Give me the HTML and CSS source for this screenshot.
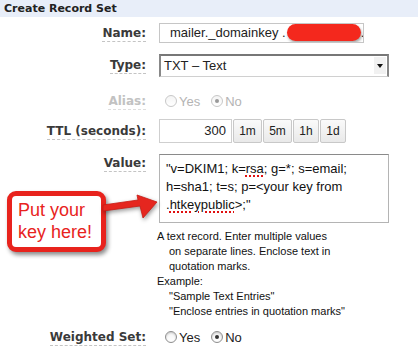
FILE: index.html
```html
<!DOCTYPE html>
<html lang="en">
<head>
    <meta charset="UTF-8">
    <title>Create Record Set</title>
    <link rel="stylesheet" href="styles.css">
</head>
<body>
    <div class="panel">
        <div class="panel-title">Create Record Set</div>

        <div class="row row-name">
            <div class="label"><span>Name:</span></div>
            <div class="field">
                <div class="text-input name-input">mailer._domainkey .<span class="redact"></span>.</div>
            </div>
        </div>

        <div class="row row-type">
            <div class="label"><span>Type:</span></div>
            <div class="field">
                <div class="select">
                    <span class="select-text">TXT &ndash; Text</span>
                    <span class="select-btn"><span class="caret"></span></span>
                </div>
            </div>
        </div>

        <div class="row row-alias disabled">
            <div class="label"><span>Alias:</span></div>
            <div class="field radios">
                <span class="radio"></span><span class="radio-label">Yes</span>
                <span class="radio checked"></span><span class="radio-label">No</span>
            </div>
        </div>

        <div class="row row-ttl">
            <div class="label"><span>TTL (seconds):</span></div>
            <div class="field ttl">
                <div class="text-input ttl-input">300</div>
                <div class="ttl-btn wide">1m</div>
                <div class="ttl-btn wide">5m</div>
                <div class="ttl-btn">1h</div>
                <div class="ttl-btn">1d</div>
            </div>
        </div>

        <div class="row row-value">
            <div class="label"><span>Value:</span></div>
            <div class="field">
                <div class="textarea">"v=DKIM1; k=<span class="typo">rsa</span>; g=*; s=email;<br>h=sha1; t=s; p=&lt;your key from<br>.<span class="typo">htkeypublic</span>&gt;;"</div>
            </div>
        </div>

        <div class="row row-help">
            <div></div>
            <div class="help">
                <p>A text record. Enter multiple values on separate lines. Enclose text in quotation marks.</p>
                <p>Example:</p>
                <p class="indent">"Sample Text Entries"</p>
                <p class="indent">"Enclose entries in quotation marks"</p>
            </div>
        </div>

        <div class="row row-weighted">
            <div class="label"><span>Weighted Set:</span></div>
            <div class="field radios">
                <span class="radio"></span><span class="radio-label">Yes</span>
                <span class="radio checked"></span><span class="radio-label">No</span>
            </div>
        </div>

        <!-- annotation -->
        <div class="callout">Put your<br>key here!</div>
        <svg class="arrow" width="60" height="32" viewBox="0 0 60 32">
            <polygon points="3,15 38,10 37,5 57,12 43,28 40,16 3,21" fill="#e5261f" stroke="#c81a14" stroke-width="0.8" stroke-linejoin="round"/>
        </svg>
    </div>
</body>
</html>
```

FILE: styles.css
```css
body {
    margin: 0;
    padding: 0;
    background: #fff;
    font-family: 'Liberation Sans', Arial, sans-serif;
    color: #222;
}
.panel {
    position: relative;
    width: 418px;
    height: 363px;
    overflow: hidden;
}
.panel-title {
    height: 17px;
    line-height: 17px;
    padding-left: 4px;
    background-color: #e8eef9;
    font-family: 'DejaVu Sans', Verdana, sans-serif;
    font-weight: bold;
    font-size: 11px;
    color: #222;
}
.row {
    display: grid;
    grid-template-columns: 146px 1fr;
    column-gap: 13px;
    align-items: center;
}
.label {
    text-align: right;
    font-family: 'DejaVu Sans', Verdana, sans-serif;
    font-weight: bold;
    font-size: 12px;
    line-height: 15px;
    color: #3a3a3a;
}
.label span {
    border-bottom: 1px dashed #c4c4c4;
    padding-bottom: 1px;
}
.disabled .label {
    color: #c2c2c2;
}
.disabled .label span {
    border-bottom-color: #dedede;
}

.row-name {
    margin-top: 6px;
    height: 20px;
}
.row-type {
    margin-top: 11px;
    height: 23px;
}
.row-alias {
    margin-top: 15px;
    height: 18px;
}
.row-ttl {
    margin-top: 9px;
    height: 24px;
}
.row-value {
    margin-top: 11px;
    align-items: start;
}
.row-value .label {
    padding-top: 2px;
}
.row-help {
    margin-top: 6px;
    align-items: start;
}
.row-weighted {
    margin-top: 9px;
    height: 18px;
}

.text-input {
    box-sizing: border-box;
    border: 1px solid #c6c6c6;
    font-size: 13px;
    line-height: 18px;
    white-space: nowrap;
    overflow: hidden;
    background: #fff;
}
.name-input {
    width: 205px;
    height: 20px;
    padding: 0 10px;
}
.redact {
    display: inline-block;
    width: 74px;
    height: 17px;
    margin-left: 1px;
    vertical-align: -4px;
    background-color: #f4281d;
    border-radius: 9px;
    box-shadow: 1px 2px 3px rgba(0, 0, 0, 0.35);
}

.select {
    box-sizing: border-box;
    width: 230px;
    height: 23px;
    display: flex;
    align-items: stretch;
    border: 1px solid #d0d0d0;
    border-top: 2px solid #777;
    border-left: 2px solid #888;
    border-right: 2px solid #888;
    background: #fff;
    font-size: 13px;
}
.select-text {
    flex: 1;
    line-height: 19px;
    padding-left: 3px;
}
.select-btn {
    width: 12px;
    margin: 1px 1px 2px 0;
    background: #f1f1f1;
    display: flex;
    align-items: center;
    justify-content: center;
}
.caret {
    width: 0;
    height: 0;
    border-left: 3px solid transparent;
    border-right: 3px solid transparent;
    border-top: 4px solid #111;
}

.radios {
    display: flex;
    align-items: center;
    font-size: 13px;
    padding-left: 6px;
}
.radio {
    box-sizing: border-box;
    position: relative;
    width: 12px;
    height: 12px;
    border-radius: 50%;
    border: 1px solid #8e8e8e;
    background: linear-gradient(#f4f4f4, #fff);
    box-shadow: inset 0 1px 2px rgba(0, 0, 0, 0.2);
}
.radio.checked::after {
    content: '';
    position: absolute;
    left: 3px;
    top: 3px;
    width: 4px;
    height: 4px;
    border-radius: 50%;
    background: #333;
}
.radio-label {
    margin-left: 2px;
    margin-right: 11px;
    color: #222;
}
.disabled .radio {
    border-color: #c8c8c8;
    box-shadow: none;
}
.disabled .radio.checked::after {
    background: #999;
}
.disabled .radio-label {
    color: #b4b4b4;
}

.ttl {
    display: flex;
    gap: 1px;
}
.ttl-input {
    width: 73px;
    height: 24px;
    line-height: 22px;
    text-align: right;
    padding-right: 5px;
    border-color: #cfcfcf;
}
.ttl-btn {
    box-sizing: border-box;
    width: 26px;
    height: 24px;
    border: 1px solid #c8c8c8;
    border-radius: 2px;
    background: linear-gradient(#fafafa, #e9e9e9);
    font-size: 12px;
    line-height: 22px;
    text-align: center;
    color: #222;
}
.ttl-btn.wide {
    width: 29px;
}

.textarea {
    box-sizing: border-box;
    width: 230px;
    height: 69px;
    padding: 5px 6px;
    border: 1px solid #b4b4b4;
    border-top-color: #8a8a8a;
    font-size: 13px;
    line-height: 18px;
    color: #111;
}
.typo {
    text-decoration: underline dotted #e01010;
    text-decoration-thickness: 2px;
    text-underline-offset: 2px;
}

.help {
    margin-left: -2px;
    font-size: 11px;
    line-height: 15px;
    color: #111;
}
.help p {
    margin: 0;
    width: 165px;
    padding-left: 12px;
    text-indent: -12px;
}
.help p.indent {
    width: 220px;
    text-indent: 0;
}

.callout {
    position: absolute;
    left: 7px;
    top: 191px;
    box-sizing: border-box;
    width: 99px;
    height: 61px;
    padding: 3px 0 0 6px;
    border: 5px solid #e8231d;
    border-radius: 9px;
    background: #fff;
    box-shadow: 2px 3px 4px rgba(0, 0, 0, 0.45);
    font-size: 18px;
    line-height: 22px;
    color: #e8231d;
}
.arrow {
    position: absolute;
    left: 100px;
    top: 190px;
    filter: drop-shadow(1px 2px 2px rgba(0, 0, 0, 0.4));
}
```
